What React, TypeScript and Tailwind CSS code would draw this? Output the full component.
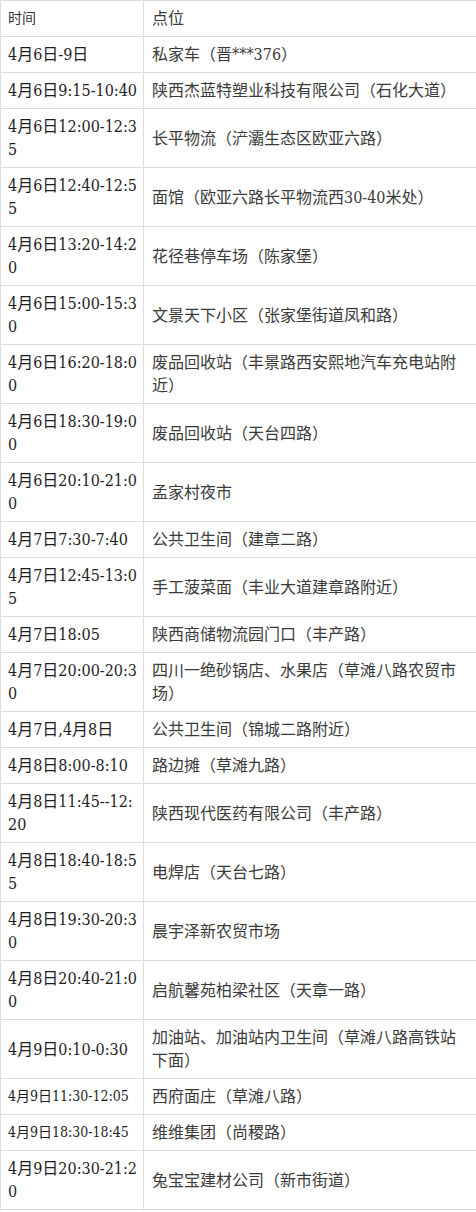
import React from "react";

type Row = { t: string[]; p: string[]; small?: boolean };

const rows: Row[] = [
  { t: ["4月6日-9日"], p: ["私家车（晋***376）"] },
  { t: ["4月6日9:15-10:40"], p: ["陕西杰蓝特塑业科技有限公司（石化大道）"] },
  { t: ["4月6日12:00-12:3", "5"], p: ["长平物流（浐灞生态区欧亚六路）"] },
  { t: ["4月6日12:40-12:5", "5"], p: ["面馆（欧亚六路长平物流西30-40米处）"] },
  { t: ["4月6日13:20-14:2", "0"], p: ["花径巷停车场（陈家堡）"] },
  { t: ["4月6日15:00-15:3", "0"], p: ["文景天下小区（张家堡街道凤和路）"] },
  { t: ["4月6日16:20-18:0", "0"], p: ["废品回收站（丰景路西安熙地汽车充电站附", "近）"] },
  { t: ["4月6日18:30-19:0", "0"], p: ["废品回收站（天台四路）"] },
  { t: ["4月6日20:10-21:0", "0"], p: ["孟家村夜市"] },
  { t: ["4月7日7:30-7:40"], p: ["公共卫生间（建章二路）"] },
  { t: ["4月7日12:45-13:0", "5"], p: ["手工菠菜面（丰业大道建章路附近）"] },
  { t: ["4月7日18:05"], p: ["陕西商储物流园门口（丰产路）"] },
  { t: ["4月7日20:00-20:3", "0"], p: ["四川一绝砂锅店、水果店（草滩八路农贸市", "场）"] },
  { t: ["4月7日,4月8日"], p: ["公共卫生间（锦城二路附近）"] },
  { t: ["4月8日8:00-8:10"], p: ["路边摊（草滩九路）"] },
  { t: ["4月8日11:45--12:", "20"], p: ["陕西现代医药有限公司（丰产路）"] },
  { t: ["4月8日18:40-18:5", "5"], p: ["电焊店（天台七路）"] },
  { t: ["4月8日19:30-20:3", "0"], p: ["晨宇泽新农贸市场"] },
  { t: ["4月8日20:40-21:0", "0"], p: ["启航馨苑柏梁社区（天章一路）"] },
  { t: ["4月9日0:10-0:30"], p: ["加油站、加油站内卫生间（草滩八路高铁站", "下面）"] },
  { t: ["4月9日11:30-12:05"], p: ["西府面庄（草滩八路）"], small: true },
  { t: ["4月9日18:30-18:45"], p: ["维维集团（尚稷路）"], small: true },
  { t: ["4月9日20:30-21:2", "0"], p: ["兔宝宝建材公司（新市街道）"] },
];

const serif = {
  fontFamily:
    '"DejaVu Serif Condensed", "Liberation Serif", "Noto Sans CJK SC", serif',
};

export default function App() {
  return (
    <div className="w-[476px] bg-white">
      <table
        className="w-[476px] table-fixed border-collapse"
        style={serif}
      >
        <colgroup>
          <col className="w-[143px]" />
          <col className="w-[333px]" />
        </colgroup>
        <tbody>
          <tr>
            <td className="border border-[#dcdcdc] pl-[7px] pr-[6px] py-[6px] align-middle text-[14px] leading-[23px] text-[#333]">
              时间
            </td>
            <td className="border border-[#dcdcdc] pl-[8px] pr-[6px] py-[6px] align-middle text-[16px] leading-[23px] text-[#3a3a3a]">
              点位
            </td>
          </tr>
          {rows.map((r, i) => (
            <tr key={i}>
              <td
                className={
                  r.small
                    ? "border border-[#dcdcdc] pl-[7px] pr-[4px] py-[6px] align-middle text-[14px] leading-[23px] text-[#1e1e1e] whitespace-nowrap"
                    : "border border-[#dcdcdc] pl-[7px] pr-[4px] py-[6px] align-middle text-[16px] leading-[23px] text-[#1e1e1e] whitespace-nowrap"
                }
              >
                {r.t.map((l, j) => (
                  <div key={j}>{l}</div>
                ))}
              </td>
              <td className="border border-[#dcdcdc] pl-[8px] pr-[4px] py-[6px] align-middle text-[16px] leading-[23px] text-[#3a3a3a] whitespace-nowrap">
                {r.p.map((l, j) => (
                  <div key={j}>{l}</div>
                ))}
              </td>
            </tr>
          ))}
        </tbody>
      </table>
    </div>
  );
}
